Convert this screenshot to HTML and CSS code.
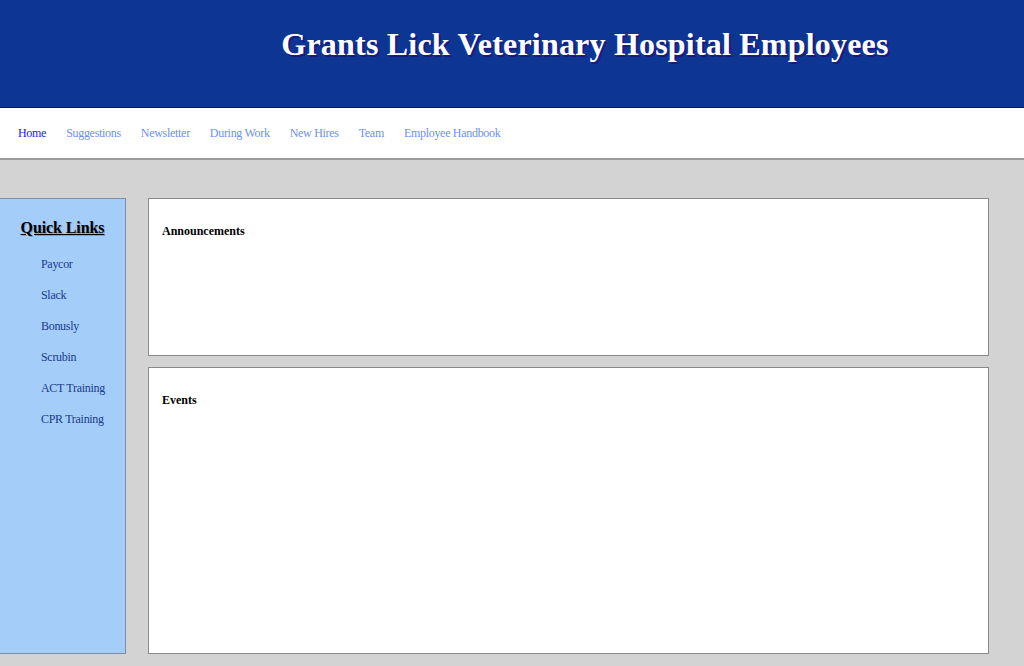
FILE: index.html
```html
<!DOCTYPE html>
<html>
<head>
<meta charset="utf-8">
<link rel="stylesheet" href="styles.css">
</head>
<body>
<header class="banner">
  <h1 class="title">Grants Lick Veterinary Hospital Employees</h1>
</header>
<nav class="nav">
  <a class="nav-link active" href="#">Home</a>
  <a class="nav-link" href="#">Suggestions</a>
  <a class="nav-link" href="#">Newsletter</a>
  <a class="nav-link" href="#">During Work</a>
  <a class="nav-link" href="#">New Hires</a>
  <a class="nav-link" href="#">Team</a>
  <a class="nav-link" href="#">Employee Handbook</a>
</nav>
<div class="page">
  <aside class="sidebar">
    <h2 class="side-title">Quick Links</h2>
    <ul class="links">
      <li><a href="#">Paycor</a></li>
      <li><a href="#">Slack</a></li>
      <li><a href="#">Bonusly</a></li>
      <li><a href="#">Scrubin</a></li>
      <li><a href="#">ACT Training</a></li>
      <li><a href="#">CPR Training</a></li>
    </ul>
  </aside>
  <main class="content">
    <section class="box box-ann"><h3 class="box-title">Announcements</h3></section>
    <section class="box box-events"><h3 class="box-title">Events</h3></section>
  </main>
</div>
</body>
</html>
```
FILE: styles.css
```css
* { box-sizing: border-box; }
html, body { margin: 0; padding: 0; height: 100%; }
body {
  font-family: "Liberation Serif", "Times New Roman", serif;
  background: #d3d3d3;
  overflow: hidden;
}
.banner {
  height: 108px;
  background: #0d3593;
  border-bottom: 1px solid #06185a;
  padding-top: 25px;
  padding-left: 146px;
}
.title {
  margin: 0;
  text-align: center;
  color: #ffffff;
  font-size: 32px;
  font-weight: bold;
  line-height: 38px;
  letter-spacing: 0.2px;
  text-shadow: 2px 2px 0 #1a1a80;
}
.nav {
  height: 52px;
  background: #ffffff;
  border-bottom: 2px solid #9a9a9a;
  display: flex;
  align-items: center;
  gap: 20px;
  padding-left: 18px;
  padding-bottom: 0;
}
.nav-link {
  font-size: 12px;
  letter-spacing: -0.3px;
  color: #6f8ff0;
  text-decoration: none;
}
.nav-link.active { color: #1a1aee; }
.page {
  display: flex;
  gap: 22px;
  padding: 38px 35px 12px 0;
  height: calc(100% - 160px);
}
.sidebar {
  width: 126px;
  flex: none;
  background: #a4cdfa;
  border: 1px solid #7b8ea6;
  border-left: none;
}
.side-title {
  margin: 19px 0 0;
  text-align: center;
  font-size: 16px;
  letter-spacing: -0.1px;
  line-height: 20px;
  font-weight: bold;
  text-decoration: underline;
  text-shadow: 1px 1px 0 #8a9fb8;
  color: #000;
}
.links {
  list-style: none;
  margin: 19px 0 0;
  padding: 0 0 0 41px;
}
.links li {
  font-size: 12px;
  letter-spacing: -0.3px;
  line-height: 15px;
  margin-bottom: 16px;
}
.links a {
  color: #1b3b8c;
  text-decoration: none;
}
.content {
  flex: 1;
  display: flex;
  flex-direction: column;
  gap: 11px;
}
.box {
  background: #ffffff;
  border: 1px solid #8a8a8a;
  padding: 25px 13px;
}
.box-ann { height: 158px; flex: none; }
.box-events { flex: 1; }
.box-title {
  margin: 0;
  font-size: 12px;
  font-weight: bold;
  color: #000;
}
```
